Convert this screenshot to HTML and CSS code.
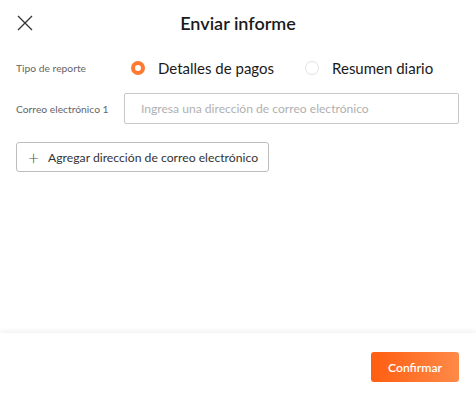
FILE: index.html
```html
<!DOCTYPE html>
<html lang="es">
<head>
    <meta charset="UTF-8">
    <title>Enviar informe</title>
    <link rel="stylesheet" href="styles.css">
</head>
<body>
    <div class="modal">
        <div class="header">
            <button class="close">
                <svg width="16" height="16" viewBox="0 0 16 16">
                    <path d="M1 1L15 15M15 1L1 15" stroke="#333" stroke-width="1.3" fill="none"/>
                </svg>
            </button>
            <h2>Enviar informe</h2>
        </div>

        <div class="content">
            <div class="row">
                <span class="label">Tipo de reporte</span>
                <div class="radios">
                    <label class="radio checked"><span class="dot"></span>Detalles de pagos</label>
                    <label class="radio"><span class="dot"></span>Resumen diario</label>
                </div>
            </div>

            <div class="row email-row">
                <span class="label">Correo electrónico 1</span>
                <input type="text" placeholder="Ingresa una dirección de correo electrónico">
            </div>

            <button class="add-button"><span class="plus">+</span>Agregar dirección de correo electrónico</button>
        </div>

        <div class="footer">
            <button class="confirm">Confirmar</button>
        </div>
    </div>
</body>
</html>
```

FILE: styles.css
```css
body {
    margin: 0;
    padding: 0;
    font-family: Lato, "Noto Sans", sans-serif;
    background: #fff;
    color: #222;
}

.modal {
    width: 476px;
    height: 396px;
    display: flex;
    flex-direction: column;
}

.header {
    height: 45px;
    display: flex;
    align-items: center;
    justify-content: center;
    position: relative;
}

.header h2 {
    margin: 0;
    font-size: 18px;
    font-weight: 600;
    color: #1a1a1a;
}

.close {
    position: absolute;
    left: 17px;
    top: 15px;
    padding: 0;
    border: none;
    background: none;
    width: 16px;
    height: 16px;
    cursor: pointer;
}

.content {
    flex: 1;
    padding: 10px 17px 0 16px;
}

.row {
    display: flex;
    align-items: center;
}

.label {
    width: 108px;
    font-size: 10.3px;
    color: #666;
}

.radios {
    display: flex;
    gap: 24px;
    height: 26px;
    align-items: center;
}

.radio {
    display: flex;
    align-items: center;
    font-size: 15px;
    color: #1a1a1a;
}

.radio .dot {
    width: 14px;
    height: 14px;
    border: 1px solid #e2e2e2;
    border-radius: 50%;
    margin: 0 13px 0 7px;
    box-sizing: border-box;
}

.radio.checked .dot {
    border: 4.5px solid #ff7a30;
    background: #fff;
}

.email-row {
    margin-top: 12px;
}

.email-row input {
    width: 335px;
    height: 31px;
    box-sizing: border-box;
    border: 1px solid #c8c8c8;
    border-radius: 2px;
    padding: 0 16px;
    font-family: inherit;
    font-size: 12.1px;
    outline: none;
}

.email-row input::placeholder {
    color: #b0b0b0;
}

.add-button {
    margin-top: 18px;
    height: 30px;
    width: 253px;
    padding: 0 0 0 11px;
    border: 1px solid #bdbdbd;
    border-radius: 3px;
    background: #fff;
    font-family: inherit;
    font-size: 12.2px;
    color: #333;
    display: flex;
    align-items: center;
    white-space: nowrap;
    cursor: pointer;
}

.plus {
    font-size: 19px;
    font-weight: 300;
    color: #555;
    margin-right: 9px;
    line-height: 1;
}

.footer {
    height: 58px;
    padding: 5px 17px 0 0;
    box-shadow: 0 -2px 5px rgba(0, 0, 0, 0.06);
    display: flex;
    justify-content: flex-end;
    align-items: center;
}

.confirm {
    width: 88px;
    height: 30px;
    border: none;
    border-radius: 3px;
    background: linear-gradient(to right, #ff5e10, #ff8a48);
    color: #fff;
    font-family: inherit;
    font-size: 12.2px;
    font-weight: 600;
    cursor: pointer;
}
```
